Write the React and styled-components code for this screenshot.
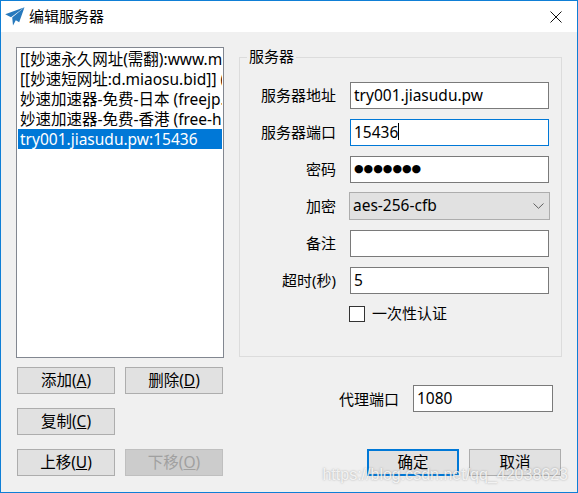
import React from 'react';
import styled, { createGlobalStyle } from 'styled-components';

const GlobalStyle = createGlobalStyle`
    html, body {
        margin: 0;
        padding: 0;
        background: #f0f0f0;
    }
    * {
        box-sizing: border-box;
    }
`

const servers = [
    '[[妙速永久网址(需翻):www.miaosu.bid]] (www.miaosu.bid)',
    '[[妙速短网址:d.miaosu.bid]] (d.miaosu.bid)',
    '妙速加速器-免费-日本 (freejp.miaosu.bid)',
    '妙速加速器-免费-香港 (free-hk.miaosu.bid)',
    'try001.jiasudu.pw:15436',
];

const Plane = () => (
    <svg width="20" height="19" viewBox="0 0 20 19">
        <path d="M19.5 0.2 L0.2 7.2 L6 10.2 Z" fill="#2779bd" />
        <path d="M19.5 0.2 L7.2 10.6 L8 18.4 L10.8 13.2 L14.2 15.2 Z" fill="#2779bd" />
    </svg>
);

const Close = () => (
    <CloseIcon width="12" height="12" viewBox="0 0 12 12">
        <path d="M0.5 0.5 L11.5 11.5 M11.5 0.5 L0.5 11.5" stroke="#111" strokeWidth="1" fill="none" />
    </CloseIcon>
);

const Chevron = () => (
    <ChevronIcon width="11" height="6" viewBox="0 0 11 6">
        <path d="M0.5 0.5 L5.5 5.3 L10.5 0.5" stroke="#606060" strokeWidth="1" fill="none" />
    </ChevronIcon>
);

const App = () => (
    <Window>
        <GlobalStyle />
        <TitleBar>
            <Plane />
            <Title>编辑服务器</Title>
            <Close />
        </TitleBar>
        <Body>
            <LeftColumn>
                <ServerList>
                    {servers.map((name, i) => (
                        <ServerItem key={name} $selected={i === servers.length - 1}>{name}</ServerItem>
                    ))}
                </ServerList>
                <ListButtons>
                    <Button>添加(<u>A</u>)</Button>
                    <Button>删除(<u>D</u>)</Button>
                    <Button>复制(<u>C</u>)</Button>
                    <span />
                    <Button>上移(<u>U</u>)</Button>
                    <Button $disabled>下移(<u>O</u>)</Button>
                </ListButtons>
            </LeftColumn>
            <RightColumn>
                <Group>
                    <Legend>服务器</Legend>
                    <FormGrid>
                        <Label>服务器地址</Label>
                        <Field>try001.jiasudu.pw</Field>
                        <Label>服务器端口</Label>
                        <Field $focused>15436<Caret /></Field>
                        <Label>密码</Label>
                        <Field><Dots>●●●●●●●</Dots></Field>
                        <Label>加密</Label>
                        <Select>aes-256-cfb<Chevron /></Select>
                        <Label>备注</Label>
                        <Field />
                        <Label>超时(秒)</Label>
                        <Field>5</Field>
                        <CheckRow>
                            <CheckBox />
                            <CheckLabel>一次性认证</CheckLabel>
                        </CheckRow>
                    </FormGrid>
                </Group>
                <ProxyRow>
                    <ProxyLabel>代理端口</ProxyLabel>
                    <ProxyField>1080</ProxyField>
                </ProxyRow>
                <ActionRow>
                    <ActionButton $primary>确定</ActionButton>
                    <ActionButton>取消</ActionButton>
                </ActionRow>
            </RightColumn>
        </Body>
        <Watermark>https://blog.csdn.net/qq_42038623</Watermark>
    </Window>
);

const Window = styled.div`
    position: relative;
    width: 578px;
    height: 493px;
    border: 1px solid #0f7fd6;
    background: #f0f0f0;
    overflow: hidden;
    font-family: "Noto Sans", "Noto Sans CJK SC", sans-serif;
    font-size: 15.5px;
    color: #000;
`
const TitleBar = styled.div`
    height: 31px;
    background: #fff;
    display: flex;
    align-items: center;
    padding: 0 15px 0 4px;
`
const Title = styled.div`
    flex: 1;
    margin-left: 4px;
    font-size: 15px;
    line-height: 20px;
    padding-bottom: 2px;
`
const CloseIcon = styled.svg`
    display: block;
    margin-top: 1px;
`
const ChevronIcon = styled.svg`
    display: block;
    margin-top: 2px;
`
const Body = styled.div`
    display: flex;
    padding: 15px 0 0 15px;
    align-items: flex-start;
`
const LeftColumn = styled.div`
    width: 208px;
    display: flex;
    flex-direction: column;
`
const ServerList = styled.div`
    height: 311px;
    background: #fff;
    border: 1px solid #828790;
    padding: 1px;
    overflow: hidden;
`
const ServerItem = styled.div`
    height: 20px;
    line-height: 20px;
    padding-left: 2px;
    white-space: nowrap;
    overflow: hidden;
    background: ${props => props.$selected ? '#0078d7' : 'transparent'};
    color: ${props => props.$selected ? '#fff' : '#000'};
`
const ListButtons = styled.div`
    display: grid;
    grid-template-columns: 98px 98px;
    grid-auto-rows: 27px;
    column-gap: 10px;
    row-gap: 14px;
    margin: 9px 0 0 1px;
`
const Button = styled.div`
    display: flex;
    align-items: center;
    justify-content: center;
    height: 27px;
    padding-bottom: 2px;
    background: ${props => props.$disabled ? '#cccccc' : '#e1e1e1'};
    border: 1px solid ${props => props.$disabled ? '#bfbfbf' : '#adadad'};
    color: ${props => props.$disabled ? '#a0a0a0' : '#000'};
    white-space: pre;
`
const RightColumn = styled.div`
    width: 323px;
    margin-left: 15px;
    display: flex;
    flex-direction: column;
`
const Group = styled.fieldset`
    margin: 2px 0 0;
    height: 308px;
    padding: 17px 0 0;
    border: 1px solid #dcdcdc;
    min-width: 0;
`
const Legend = styled.legend`
    margin-left: 7px;
    padding: 0 2px 1px;
    font-size: 15px;
    line-height: 15px;
`
const FormGrid = styled.div`
    display: grid;
    grid-template-columns: 97px 199px;
    grid-auto-rows: 27px;
    column-gap: 13px;
    row-gap: 10px;
    align-items: center;
`
const Label = styled.div`
    text-align: right;
    white-space: nowrap;
    font-size: 15px;
    padding: 0 1px 3px 0;
`
const Field = styled.div`
    height: 27px;
    display: flex;
    align-items: center;
    padding: 0 3px 2px;
    background: #fff;
    border: 1px solid ${props => props.$focused ? '#0078d7' : '#7a7a7a'};
`
const Caret = styled.span`
    width: 1px;
    height: 17px;
    background: #000;
`
const Dots = styled.span`
    font-family: "DejaVu Sans", sans-serif;
    font-size: 11px;
    letter-spacing: 0;
`
const Select = styled.div`
    width: 201px;
    height: 28px;
    margin: -1px 0 0 -1px;
    display: flex;
    align-items: center;
    justify-content: space-between;
    padding: 0 5px 2px 3px;
    background: #e1e1e1;
    border: 1px solid #adadad;
`
const CheckRow = styled.div`
    grid-column: 2;
    align-self: start;
    display: flex;
    align-items: center;
    gap: 7px;
    margin: 2px 0 0 -1px;
    height: 16px;
`
const CheckBox = styled.span`
    width: 16px;
    height: 16px;
    background: #fff;
    border: 1px solid #333;
`
const CheckLabel = styled.span`
    font-size: 15px;
    padding-bottom: 3px;
`
const ProxyRow = styled.div`
    display: flex;
    align-items: center;
    justify-content: flex-end;
    gap: 14px;
    margin-top: 28px;
    padding-right: 9px;
`
const ProxyLabel = styled.span`
    font-size: 15px;
    padding-bottom: 1px;
`
const ProxyField = styled(Field)`
    width: 140px;
`
const ActionRow = styled.div`
    display: flex;
    justify-content: flex-end;
    gap: 10px;
    margin-top: 37px;
    padding-right: 1px;
`
const ActionButton = styled.div`
    width: 92px;
    height: 27px;
    display: flex;
    align-items: center;
    justify-content: center;
    padding-bottom: 2px;
    background: #e1e1e1;
    border: ${props => props.$primary ? '2px solid #0078d7' : '1px solid #adadad'};
`
const Watermark = styled.div`
    position: absolute;
    right: 9px;
    bottom: 8px;
    font-family: "Liberation Sans", sans-serif;
    font-size: 16px;
    color: rgba(255, 255, 255, 0.8);
    text-shadow: 0 0 2px rgba(110, 110, 110, 0.6);
    white-space: nowrap;
`

export default App;
